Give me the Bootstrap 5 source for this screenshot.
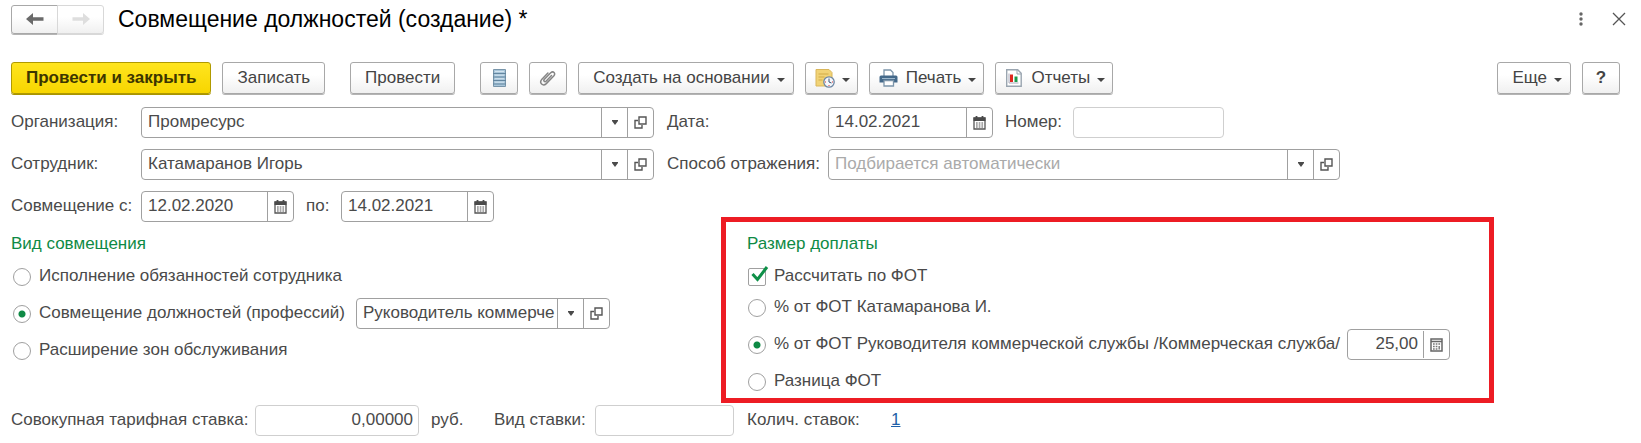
<!DOCTYPE html>
<html lang="ru">
<head>
<meta charset="utf-8">
<meta name="viewport" content="width=device-width, initial-scale=1">
<title>Совмещение должностей (создание)</title>
<link rel="stylesheet" href="https://cdn.jsdelivr.net/npm/bootstrap@5.3.0/dist/css/bootstrap.min.css">
<style>
  :root { --line: #a0a0a0; --line-soft: #cfcfcf; --ink: #4a4a4a; --green: #0e8a45; }
  body { font-family: "Liberation Sans", Arial, sans-serif; font-size: 17px; line-height: 24px; color: var(--ink); background: #fff; }
  .page { padding: 4px 21px 6px 11px; }
  .title { font-size: 23px; line-height: 30px; font-weight: 400; color: #000; margin-left: 14px; }
  .tool { --bs-btn-color: #444; --bs-btn-hover-color: #222; --bs-btn-border-color: #a8a8a8; --bs-btn-hover-border-color: #888;
    display: inline-flex; align-items: center; justify-content: center; height: 32px; padding: 0 14px; font-size: 17px; line-height: 24px;
    border-radius: 3px; background: linear-gradient(#fff 40%, #f0f0f0); box-shadow: 0 1px 0 #b4b4b4; white-space: nowrap; }
  .tool-main { --bs-btn-color: #3c3500; --bs-btn-border-color: #b09a00; background: linear-gradient(#ffe51f, #f7d600); font-weight: 700; box-shadow: 0 1px 0 #a89400; }
  .tool-square { width: 38px; padding: 0; }
  .tool-menu { padding-right: 8px; }
  .tool-menu::after { content: ""; margin: 4px 0 0 7px; border: 4px solid transparent; border-top-color: #444; border-bottom: 0; }
  .tool-icon { padding: 0 7px 0 9px; }
  .tools { gap: 11px; margin-top: 28px; }
  .apart { margin-left: 14px; }
  .window-tools { gap: 26px; margin-right: -8px; }
  .history .tool { width: 47px; height: 29px; padding: 0; }
  .tool.is-off { --bs-btn-border-color: #d8d8d8; box-shadow: 0 1px 0 #d8d8d8; }
  .bare { border: 0; background: none; padding: 0; display: inline-flex; }
  .top-grid { display: grid; grid-template-columns: minmax(0, 643fr) minmax(0, 673fr) minmax(0, 267fr); gap: 11px 13px; margin-top: 13px; }
  .low-grid { display: grid; grid-template-columns: minmax(0, 710fr) minmax(0, 773fr) minmax(0, 126fr); margin-top: 11px; }
  .line { display: flex; align-items: center; height: 31px; white-space: nowrap; }
  .cap { padding-bottom: 2px; }
  .cap-left { flex: 0 0 130px; }
  .cap-mid { flex: 0 0 161px; }
  .cap-num { flex: 0 0 68px; margin-left: 12px; }
  .cap-to { flex: 0 0 35px; margin-left: 12px; }
  .cap-post { flex: 0 0 317px; }
  .cap-percent { flex: 0 0 573px; }
  .cap-rate { flex: 0 0 244px; }
  .cap-unit { flex: 0 0 63px; margin-left: 12px; }
  .cap-kind { flex: 0 0 101px; }
  .cap-count { flex: 0 0 144px; margin-left: 13px; }
  .entry { display: flex; height: 31px; border: 1px solid var(--line); border-radius: 4px; background: #fff; overflow: hidden; }
  .entry input { flex: 1 1 0; min-width: 0; width: 0; border: 0; outline: 0; background: none; padding: 0 5px 1px 6px; color: var(--ink); }
  .entry input::placeholder { color: #aaa; opacity: 1; }
  .entry button { flex: 0 0 26px; border: 0; border-left: 1px solid var(--line); background: none; padding: 0; display: flex; align-items: center; justify-content: center; }
  .entry.is-soft { border-color: var(--line-soft); }
  .w-date { width: 153px; }
  .w-date-wide { width: 165px; }
  .w-number { width: 151px; }
  .w-post { width: 254px; }
  .entry.w-post input { padding-right: 0; }
  .w-percent { width: 103px; }
  .entry.w-percent button { margin: 1px 0; }
  .w-rate { width: 164px; }
  .w-kind { width: 139px; }
  .group-title { font-size: 17px; line-height: 22px; padding-top: 2px; font-weight: 400; color: var(--green); margin: 0; }
  .pick { appearance: none; flex: 0 0 18px; width: 18px; height: 18px; margin: 0 8px 0 1px; border: 1px solid var(--line); background: #fff; }
  .pick[type=radio] { border-radius: 50%; }
  .pick[type=radio]:checked { background: radial-gradient(circle, var(--green) 3px, #fff 4px); }
  .tick { position: relative; display: flex; }
  .tick .pick { border-radius: 2px; }
  .tick svg { position: absolute; left: 4px; top: -2px; pointer-events: none; }
  .left-part .pick { margin-left: 2px; }
  .left-part .stack { margin-top: 9px; }
  .marked { margin-top: 26px; border: 5px solid #ed1c24; padding: 9px 0 1px 21px; }
  .stack { display: flex; flex-direction: column; gap: 6px; }
  .totals { margin-top: 2px; }
  .rate-link { color: #1f5fa8; }
</style>
</head>
<body>
<svg width="0" height="0" class="d-none" aria-hidden="true">
  <symbol id="i-down" viewBox="0 0 8 5"><path d="M1 0h6v1L4 5 1 1z" fill="#4a4a4a"/></symbol>
  <symbol id="i-open" viewBox="0 0 13 13"><path d="M5 1h7v7H5zM4 4.500H1V12h7V9" fill="none" stroke="#555" stroke-width="1.400"/></symbol>
  <symbol id="i-cal" viewBox="0 0 13 14"><path d="M1 2h11v11H1z" fill="#fff" stroke="#555" stroke-width="1.3"/><path d="M.5 1.500h12V5H.5z" fill="#4a4a4a"/><path d="M3.500 0v2.500M9.500 0v2.500" stroke="#4a4a4a" stroke-width="1.8"/><path d="M3 7h1.700M5.700 7h1.700M8.400 7h1.700M3 9h1.700M5.700 9h1.700M8.400 9h1.700M3 11h1.700M5.700 11h1.700M8.400 11h1.700" stroke="#555" stroke-width="1.1"/></symbol>
  <symbol id="i-calc" viewBox="0 0 13 14"><path d="M1 1h11v12H1z" fill="#fff" stroke="#666" stroke-width="1.5"/><path d="M1 3.500h11" stroke="#666" stroke-width="1.300"/><path d="M3 6h1.700M5.700 6h1.700M8.400 6h1.700M3 8.500h1.700M5.700 8.500h1.700M3 11h1.700M5.700 11h1.700M9.200 8v3.500" stroke="#777" stroke-width="1.4"/></symbol>
</svg>

<div class="page">
  <header class="d-flex align-items-center">
    <div class="btn-group history">
      <button type="button" class="btn tool" aria-label="Назад"><svg width="18" height="14" viewBox="0 0 18 14"><path d="M0 7l7-6v4.200h10.500v3.600H7V13z" fill="#6a6a6a"/></svg></button>
      <button type="button" class="btn tool is-off" aria-label="Вперед"><svg width="18" height="14" viewBox="0 0 18 14"><path d="M18 7l-7-6v4.200H.5v3.600H11V13z" fill="#dedede"/></svg></button>
    </div>
    <h1 class="title mb-0 text-nowrap">Совмещение должностей (создание) *</h1>
    <div class="window-tools d-flex align-items-center ms-auto">
      <button type="button" class="bare" aria-label="Меню"><svg width="6" height="16" viewBox="0 0 6 16" fill="#666"><circle cx="3" cy="3" r="1.700"/><circle cx="3" cy="8" r="1.700"/><circle cx="3" cy="13" r="1.700"/></svg></button>
      <button type="button" class="bare" aria-label="Закрыть"><svg width="18" height="14" viewBox="0 0 18 14"><path d="M3 1l12 12M15 1L3 13" stroke="#555" stroke-width="1.300"/></svg></button>
    </div>
  </header>

  <div class="tools d-flex align-items-center" role="toolbar">
    <button type="button" class="btn tool tool-main">Провести и закрыть</button>
    <button type="button" class="btn tool">Записать</button>
    <button type="button" class="btn tool apart">Провести</button>
    <button type="button" class="btn tool tool-square apart" aria-label="Список"><svg width="15" height="18" viewBox="0 0 15 18"><path d="M1.500.5h12v17h-12z" fill="#a9c6da" stroke="#7895aa"/><path d="M1 4.500h13M1 8h13M1 11.500h13M1 15h13" stroke="#6386a0" stroke-width="1.200"/><path d="M3 2.500h9M3 6.200h9M3 9.700h9M3 13.200h9" stroke="#d3e4ef"/></svg></button>
    <button type="button" class="btn tool tool-square" aria-label="Файлы"><svg width="18" height="18" viewBox="0 0 18 18" fill="none" stroke="#858585" stroke-width="1.500" stroke-linecap="round"><path d="M12.500 6.500L7.300 12c-1.600 1.500-3.300-.2-1.900-1.700l6.300-6.500c2.600-2.300 5.300.5 3 3.100l-7.400 7.700c-3.400 3.200-7.600-.7-4.400-4.300l6-6.200"/></svg></button>
    <button type="button" class="btn tool tool-menu">Создать на основании</button>
    <button type="button" class="btn tool tool-menu tool-icon" aria-label="Напоминание"><svg width="20" height="20" viewBox="0 0 20 20"><path d="M1 1.500h13l3 3V18H1z" fill="#f1d376" stroke="#d9b65a"/><path d="M3.500 6h10M3.500 9h6M3.500 12h4" stroke="#d1ab47"/><circle cx="14" cy="14" r="5.200" fill="#f5f8fb" stroke="#6d86a3" stroke-width="1.300"/><path d="M14 10.500V14l2.500 1" fill="none" stroke="#39577a"/><path d="M10 14h1M17 14h1M14 17v1" stroke="#d33"/></svg></button>
    <button type="button" class="btn tool tool-menu tool-icon"><svg class="me-2" width="19" height="18" viewBox="0 0 19 18"><path d="M5 7V1h6.500L14 3.500V7" fill="#fff" stroke="#7c95aa" stroke-width="1.300"/><path d="M2 6.500h15q1.500 0 1.500 1.500v5.500H.5V8q0-1.500 1.500-1.500z" fill="#44698a"/><path d="M3 9.500h13" stroke="#9db8cd"/><path d="M5 11.500h9.500V17H5z" fill="#fff" stroke="#7c95aa" stroke-width="1.300"/></svg>Печать</button>
    <button type="button" class="btn tool tool-menu tool-icon"><svg class="me-2" width="18" height="18" viewBox="0 0 18 18"><path d="M1.700.8h11l3.500 3.500v13H1.700z" fill="#fff" stroke="#9aa5b0" stroke-width="1.400"/><path d="M12 1v4h4" fill="none" stroke="#9aa5b0"/><path d="M4 4.500v9.500h9.500" fill="none" stroke="#aab"/><path d="M5 5.500h3V13H5z" fill="#e0281e"/><path d="M9.500 7.500h3V13h-3z" fill="#1e9a4a"/></svg>Отчеты</button>
    <button type="button" class="btn tool tool-menu ms-auto">Еще</button>
    <button type="button" class="btn tool tool-square fw-bold">?</button>
  </div>

  <div class="top-grid">
    <div class="line">
      <label class="cap cap-left" for="org">Организация:</label>
      <div class="entry flex-grow-1"><input id="org" value="Промресурс"><button type="button" aria-label="Выбрать"><svg width="8" height="5"><use href="#i-down"/></svg></button><button type="button" aria-label="Открыть"><svg width="13" height="13"><use href="#i-open"/></svg></button></div>
    </div>
    <div class="line">
      <label class="cap cap-mid" for="date">Дата:</label>
      <div class="entry w-date-wide"><input id="date" value="14.02.2021"><button type="button" aria-label="Календарь"><svg width="13" height="14"><use href="#i-cal"/></svg></button></div>
      <label class="cap cap-num" for="num">Номер:</label>
      <div class="entry is-soft w-number"><input id="num"></div>
    </div>
    <div></div>
    <div class="line">
      <label class="cap cap-left" for="emp">Сотрудник:</label>
      <div class="entry flex-grow-1"><input id="emp" value="Катамаранов Игорь"><button type="button" aria-label="Выбрать"><svg width="8" height="5"><use href="#i-down"/></svg></button><button type="button" aria-label="Открыть"><svg width="13" height="13"><use href="#i-open"/></svg></button></div>
    </div>
    <div class="line">
      <label class="cap cap-mid" for="way">Способ отражения:</label>
      <div class="entry flex-grow-1"><input id="way" placeholder="Подбирается автоматически"><button type="button" aria-label="Выбрать"><svg width="8" height="5"><use href="#i-down"/></svg></button><button type="button" aria-label="Открыть"><svg width="13" height="13"><use href="#i-open"/></svg></button></div>
    </div>
  </div>

  <div class="low-grid">
    <div class="left-part">
      <div class="line">
        <label class="cap cap-left" for="from">Совмещение с:</label>
        <div class="entry w-date"><input id="from" value="12.02.2020"><button type="button" aria-label="Календарь"><svg width="13" height="14"><use href="#i-cal"/></svg></button></div>
        <label class="cap cap-to" for="to">по:</label>
        <div class="entry w-date"><input id="to" value="14.02.2021"><button type="button" aria-label="Календарь"><svg width="13" height="14"><use href="#i-cal"/></svg></button></div>
      </div>
      <div class="stack">
        <h2 class="group-title">Вид совмещения</h2>
        <div class="line"><input class="pick" type="radio" name="kind" id="k1"><label class="cap" for="k1">Исполнение обязанностей сотрудника</label></div>
        <div class="line"><input class="pick" type="radio" name="kind" id="k2" checked><label class="cap cap-post" for="k2">Совмещение должностей (профессий)</label>
          <div class="entry w-post"><input value="Руководитель коммерче" aria-label="Должность"><button type="button" aria-label="Выбрать"><svg width="8" height="5"><use href="#i-down"/></svg></button><button type="button" aria-label="Открыть"><svg width="13" height="13"><use href="#i-open"/></svg></button></div>
        </div>
        <div class="line"><input class="pick" type="radio" name="kind" id="k3"><label class="cap" for="k3">Расширение зон обслуживания</label></div>
      </div>
    </div>
    <section class="marked">
      <div class="stack">
        <h2 class="group-title">Размер доплаты</h2>
        <div>
          <div class="line"><span class="tick"><input class="pick" type="checkbox" id="fot" checked><svg width="18" height="16" viewBox="0 0 18 16"><path d="M1.500 8l5 5.500L16 1" fill="none" stroke="#0e9048" stroke-width="3"/></svg></span><label class="cap" for="fot">Рассчитать по ФОТ</label></div>
          <div class="line"><input class="pick" type="radio" name="size" id="s1"><label class="cap" for="s1">% от ФОТ Катамаранова И.</label></div>
        </div>
        <div class="line"><input class="pick" type="radio" name="size" id="s2" checked><label class="cap cap-percent" for="s2">% от ФОТ Руководителя коммерческой службы /Коммерческая служба/</label>
          <div class="entry w-percent"><input class="text-end" value="25,00" aria-label="Процент"><button type="button" aria-label="Калькулятор"><svg width="13" height="14"><use href="#i-calc"/></svg></button></div>
        </div>
        <div class="line"><input class="pick" type="radio" name="size" id="s3"><label class="cap" for="s3">Разница ФОТ</label></div>
      </div>
    </section>
  </div>

  <div class="line totals">
    <label class="cap cap-rate" for="rate">Совокупная тарифная ставка:</label>
    <div class="entry is-soft w-rate"><input id="rate" class="text-end" value="0,00000"></div>
    <span class="cap cap-unit">руб.</span>
    <label class="cap cap-kind" for="rk">Вид ставки:</label>
    <div class="entry is-soft w-kind"><input id="rk"></div>
    <span class="cap cap-count">Колич. ставок:</span>
    <a class="cap rate-link" href="#">1</a>
  </div>
</div>
<script src="https://cdn.jsdelivr.net/npm/bootstrap@5.3.0/dist/js/bootstrap.bundle.min.js"></script>
</body>
</html>
